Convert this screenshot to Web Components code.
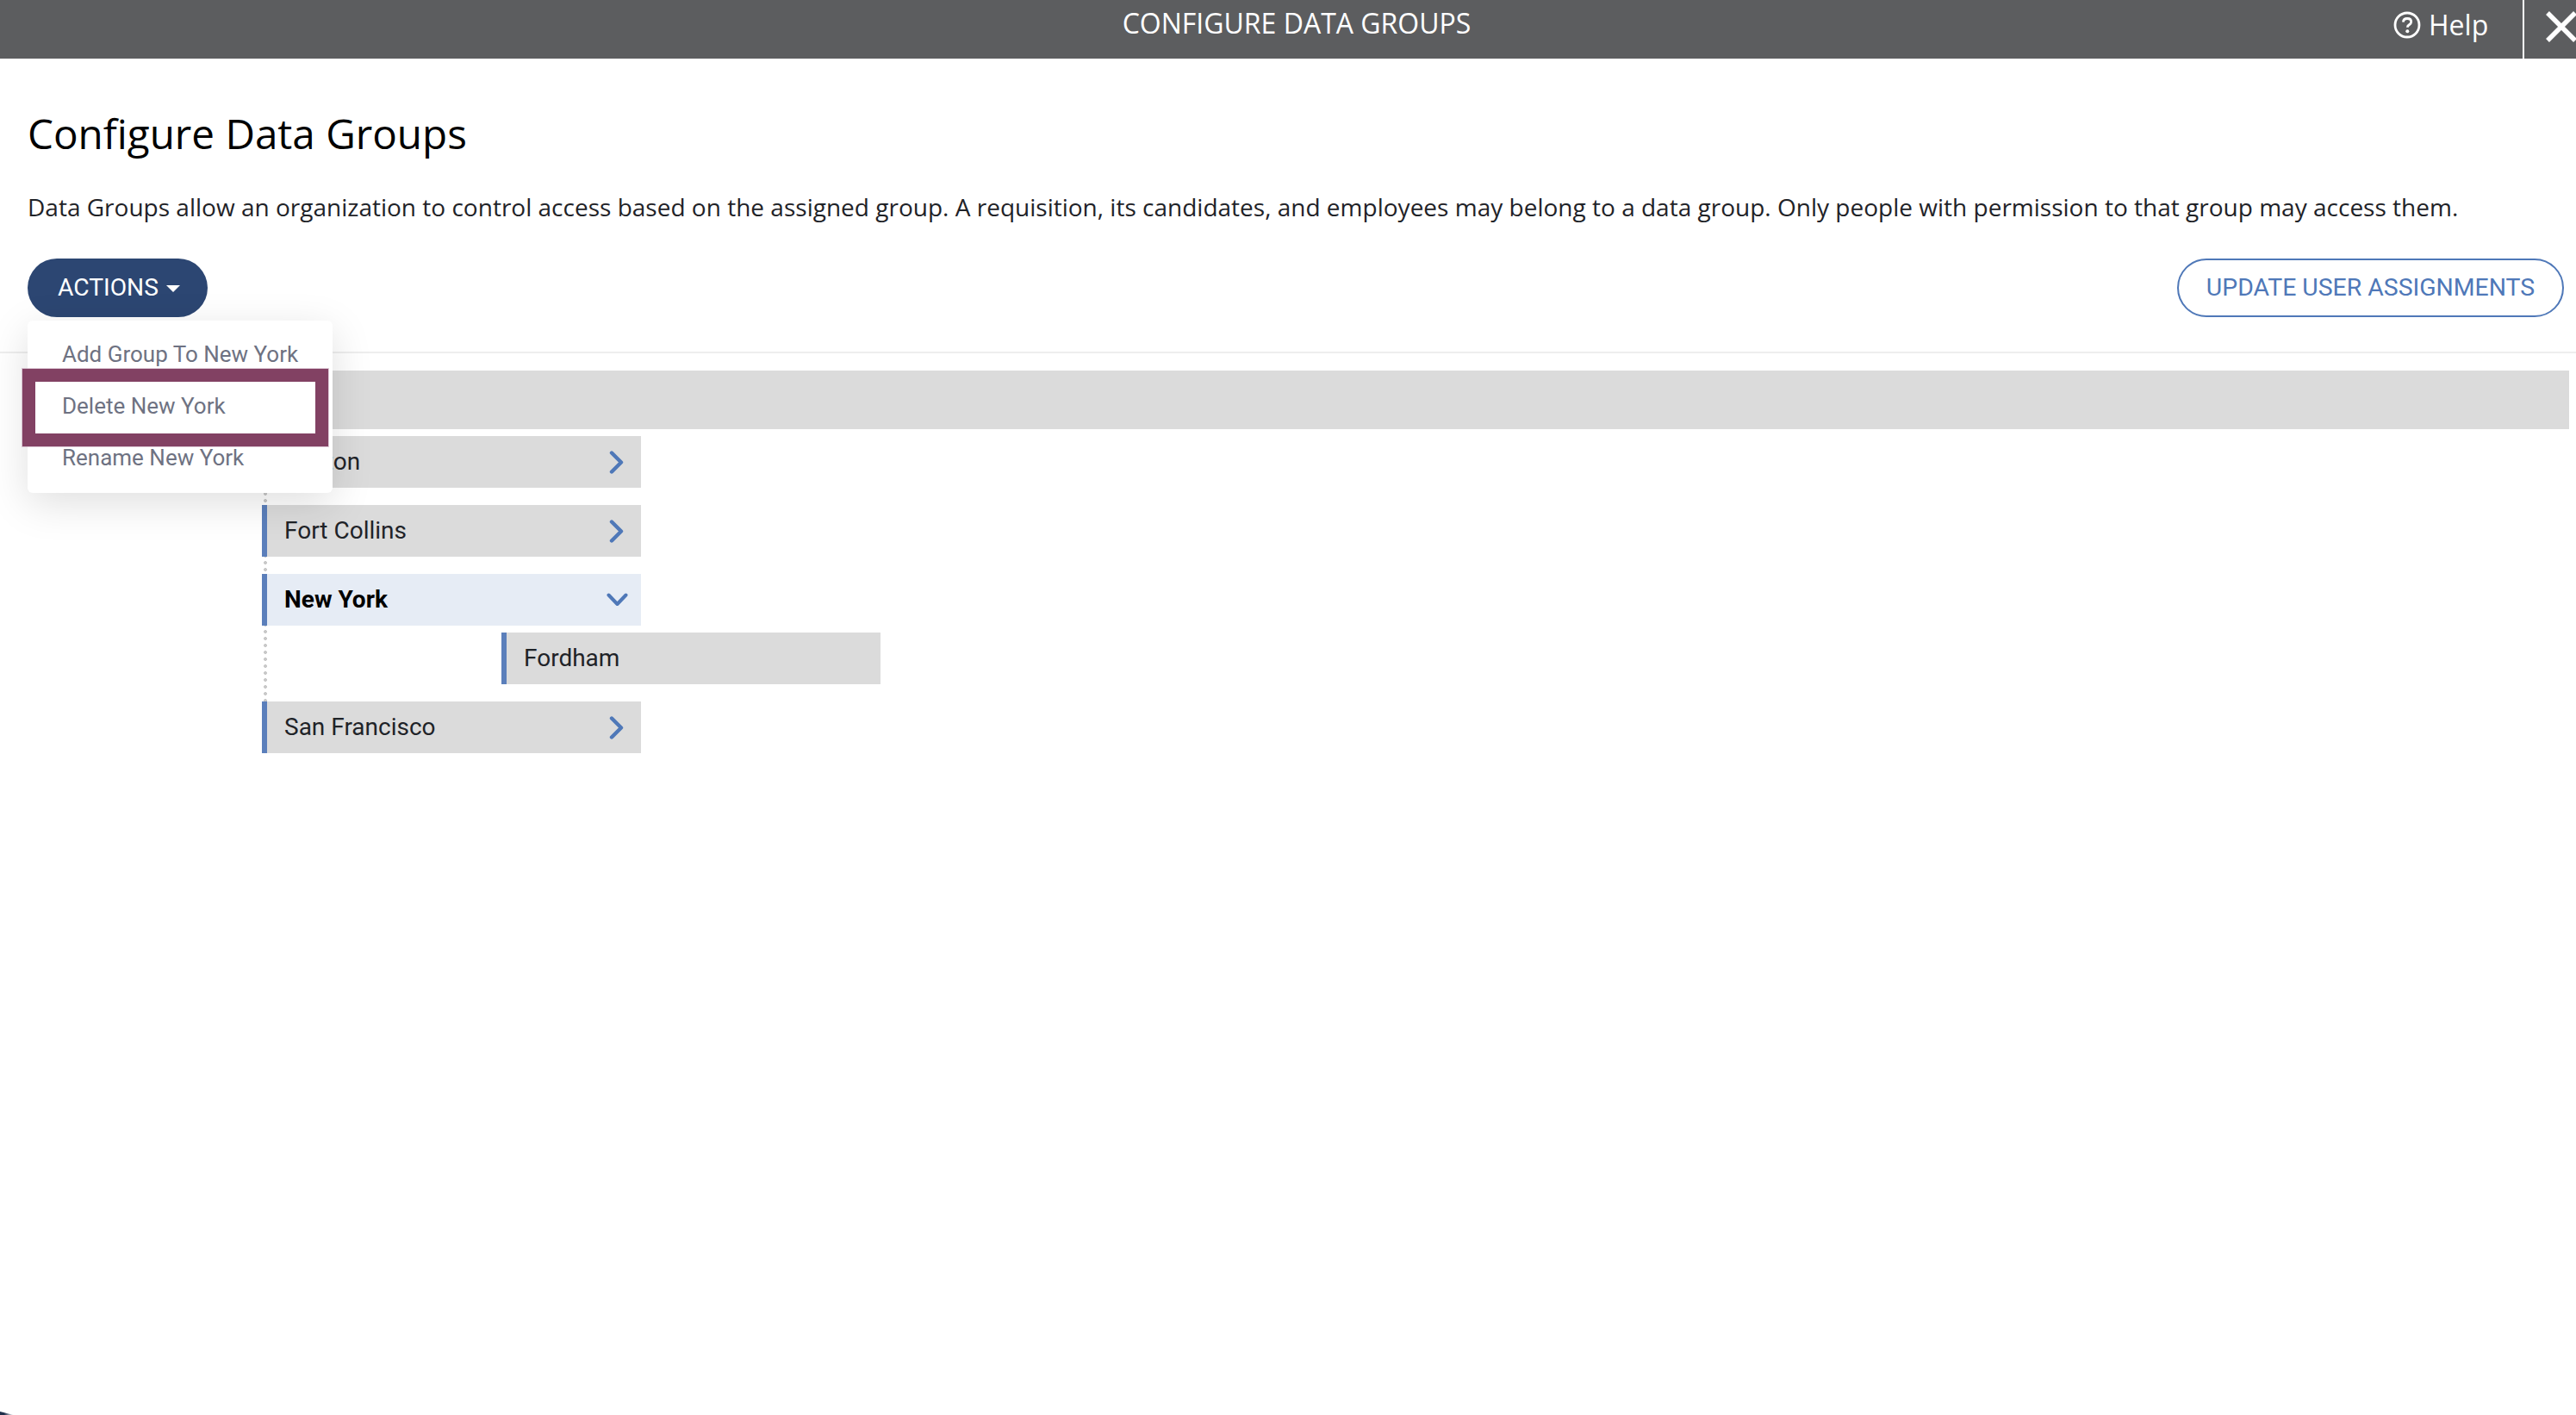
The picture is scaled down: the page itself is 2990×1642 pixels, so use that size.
<!DOCTYPE html>
<html><head><meta charset="utf-8">
<style>
html,body{margin:0;padding:0;background:#fff;overflow:hidden}
body{width:2990px;height:1642px;position:relative;font-family:"Open Sans",sans-serif}
</style></head>
<body>
<app-header title-text="CONFIGURE DATA GROUPS"></app-header>
<config-page>
  <span slot="heading">Configure Data Groups</span>
  <span slot="desc">Data Groups allow an organization to control access based on the assigned group. A requisition, its candidates, and employees may belong to a data group. Only people with permission to that group may access them.</span>
  <actions-menu slot="left">
    <menu-item>Add Group To New York</menu-item>
    <menu-item>Delete New York</menu-item>
    <menu-item>Rename New York</menu-item>
  </actions-menu>
  <outline-button slot="right">UPDATE USER ASSIGNMENTS</outline-button>
  <group-tree slot="tree">
    <tree-row chevron="right">Boston</tree-row>
    <tree-row chevron="right">Fort Collins</tree-row>
    <tree-row chevron="down" active>New York</tree-row>
    <tree-row child>Fordham</tree-row>
    <tree-row chevron="right">San Francisco</tree-row>
  </group-tree>
</config-page>
<corner-mark></corner-mark>
<script>
function def(name, html, extra){
  const t=document.createElement('template'); t.innerHTML=html;
  customElements.define(name, class extends HTMLElement{
    constructor(){super(); this.attachShadow({mode:'open'}).appendChild(t.content.cloneNode(true));}
    connectedCallback(){ if(extra) extra(this); }
  });
}
def('corner-mark',`<style>
:host{display:block;position:absolute;left:0;bottom:0;width:16px;height:4px;background:linear-gradient(90deg,#1f2f4a 0,#1f2f4a 30%,rgba(31,47,74,0) 100%);clip-path:polygon(0 0,100% 100%,0 100%)}
</style>`);
def('app-header',`<style>
:host{display:flex;height:68px;background:#5c5d5f;color:#fff;font-family:"Open Sans",sans-serif;align-items:flex-start;position:relative;overflow:hidden}
.title{position:absolute;left:20px;right:0;top:5px;text-align:center;font-size:32px;line-height:44px}
.right{margin-left:auto;display:flex;height:68px;width:212px}
.help{display:flex;align-items:center;width:150px;height:58px;gap:9px;font-size:32px;line-height:58px}
.help svg{display:block;flex:none}
.sep{width:2px;height:68px;background:#fff;flex:none}
.x{width:60px;flex:none;overflow:hidden;position:relative}
.x svg{position:absolute;left:25px;top:13px}
</style>
<div class="title"></div>
<div class="right">
<div class="help"><svg width="32" height="32" viewBox="0 0 32 32"><circle cx="16" cy="16" r="14" fill="none" stroke="#fff" stroke-width="2.8"/><path d="M11.4 12.6c.2-2.6 2.1-4.1 4.7-4.1 2.7 0 4.6 1.5 4.6 3.8 0 1.7-.9 2.6-2.3 3.5-1.3.8-2 1.4-2 3" fill="none" stroke="#fff" stroke-width="2.8"/><circle cx="16.3" cy="23.2" r="2" fill="#fff"/></svg><span>Help</span></div>
<div class="sep"></div>
<div class="x"><svg width="36" height="36" viewBox="0 0 36 36"><path d="M2 2 34 34M34 2 2 34" stroke="#fff" stroke-width="5.5" fill="none"/></svg></div>
</div>`, el=>{el.shadowRoot.querySelector('.title').textContent=el.getAttribute('title-text');});
def('config-page',`<style>
:host{display:block;font-family:"Open Sans",sans-serif;color:#1f2328}
.head{padding:57px 32px 0}
h1{margin:0;font-weight:400;font-size:47.6px;line-height:60px;color:#000}
p{margin:35px 0 0;font-size:28.02px;line-height:40px;white-space:nowrap}
.bar{display:flex;justify-content:space-between;align-items:center;height:68px;margin:40px 14px 40px 32px}
hr{margin:0;border:0;height:2px;background:#eeeeee}
.tree{padding:20px 8px 0 32px}
</style>
<div class="head"><h1><slot name="heading"></slot></h1><p><slot name="desc"></slot></p></div>
<div class="bar"><slot name="left"></slot><slot name="right"></slot></div>
<hr>
<div class="tree"><slot name="tree"></slot></div>`);
def('actions-menu',`<style>
:host{display:block;position:relative;font-family:Roboto,sans-serif}
button{display:flex;align-items:center;height:68px;width:209px;padding:0 0 2px 35px;box-sizing:border-box;border:0;border-radius:34px;background:#2c4672;color:#fff;font:400 28.2px Roboto,sans-serif}
i{display:block;margin:3px 0 0 9px;width:0;height:0;border:8px solid transparent;border-top-color:#fff;border-bottom:0}
.menu{position:absolute;z-index:5;left:0;top:72px;width:354px;height:200px;box-sizing:border-box;padding:9px 0;background:#fff;border-radius:6px;box-shadow:0 12px 48px rgba(0,0,0,.13)}
.hl{position:absolute;z-index:6;left:-6px;top:56px;width:325px;height:60px;border:15px solid #824163;box-shadow:0 0 0 1px rgba(190,150,175,.5)}
</style>
<button>ACTIONS<i></i></button>
<div class="menu"><slot></slot><div class="hl"></div></div>`);
def('menu-item',`<style>
:host{display:block;height:60px;padding-left:40px;font:400 26px/60px Roboto,sans-serif;color:#6e7282;white-space:nowrap}
</style><slot></slot>`);
def('outline-button',`<style>
:host{display:block}
button{display:block;height:68px;width:449px;padding:0 0 2px;border:2px solid #4f78b8;border-radius:34px;background:#fff;color:#4f78b8;font:400 28.4px Roboto,sans-serif;box-sizing:border-box}
</style><button><slot></slot></button>`);
def('group-tree',`<style>
:host{display:block}
.root{height:68px;background:#dbdbdb;margin-bottom:8px}
.kids{margin-left:272px;display:flex;flex-direction:column;position:relative;
 background:radial-gradient(circle at 2px 2px,#c9c9c9 1.8px,transparent 2.2px) 2px 1px/4px 8px repeat-y}
</style>
<div class="root"></div>
<div class="kids"><slot></slot></div>`);
const RIGHT=`<svg width="17" height="27" viewBox="0 0 17 27"><path d="M3 2.5 14 13.5 3 24.5" fill="none" stroke="#4f78b8" stroke-width="4.4" stroke-linecap="round" stroke-linejoin="round"/></svg>`;
const DOWN=`<svg width="25" height="16" viewBox="0 0 25 16"><path d="M2.5 2.5 12.5 13 22.5 2.5" fill="none" stroke="#4f78b8" stroke-width="4" stroke-linecap="round" stroke-linejoin="round"/></svg>`;
def('tree-row',`<style>
:host{display:flex;align-items:center;width:440px;height:60px;box-sizing:border-box;background:#dbdbdb;border-left:6px solid #5b7fbb;padding:0 0 2px 20px;font:400 28px Roboto,sans-serif;color:#1f2328;margin-bottom:20px;position:relative}
:host(:last-child){margin-bottom:0}
:host([active]){background:#e6ecf5;font-weight:700;color:#000;margin-bottom:8px}
:host([child]){margin-left:278px}
.c{position:absolute;right:20px;top:0;height:100%;display:flex;align-items:center}
:host([active]) .c{right:15px}
svg{display:block}
</style><slot></slot><span class="c"></span>`, el=>{
  const c=el.getAttribute('chevron');
  if(c) el.shadowRoot.querySelector('.c').innerHTML=c==='down'?DOWN:RIGHT;
});
</script>
</body></html>
